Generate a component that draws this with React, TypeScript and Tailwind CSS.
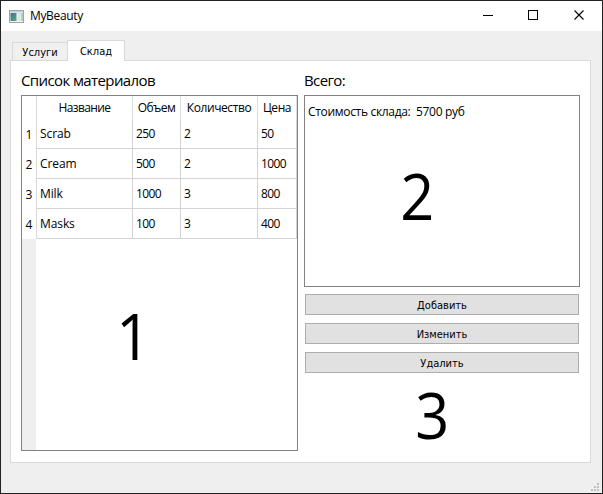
import React from "react";

const ui = "font-['Open_Sans','Noto_Sans',sans-serif]";
const tahoma = "font-['DejaVu_Sans_Condensed','DejaVu_Sans',sans-serif]";

const rows = [
  ["Scrab", "250", "2", "50"],
  ["Cream", "500", "2", "1000"],
  ["Milk", "1000", "3", "800"],
  ["Masks", "100", "3", "400"],
];

const columns = [
  { title: "Название", width: "w-24", tracking: "tracking-[-0.6px]" },
  { title: "Объем", width: "w-12", tracking: "tracking-[-0.55px]" },
  { title: "Количество", width: "w-[77px]", tracking: "tracking-[-0.4px]" },
  { title: "Цена", width: "w-[39px]", tracking: "tracking-[-0.45px]" },
];

function TitleBar() {
  return (
    <header className="flex h-[30px] shrink-0 items-center bg-white">
      <svg className="ml-2 mr-[6px] shrink-0" width="15" height="13" viewBox="0 0 15 13">
        <defs>
          <linearGradient id="pane" x1="0" y1="0" x2="1" y2="1">
            <stop offset="0" stopColor="#3e6f92" />
            <stop offset="1" stopColor="#56ad7c" />
          </linearGradient>
        </defs>
        <rect x="0.5" y="0.5" width="14" height="12" fill="#f4f5f5" stroke="#9da4a9" />
        <rect x="1" y="1" width="13" height="1.5" fill="#c4cdd2" />
        <rect x="1.5" y="3" width="6" height="8" fill="url(#pane)" />
        <rect x="8.5" y="3" width="3" height="8" fill="#e0e3e4" />
        <rect x="12.5" y="3" width="1" height="8" fill="#6ba98c" />
      </svg>
      <span className="flex-1 text-[12px] leading-[16px] tracking-[-0.35px]">MyBeauty</span>
      <svg width="120" height="30" viewBox="0 0 120 30" fill="none" stroke="#000" shapeRendering="crispEdges">
        <path d="M1 14.5h10M46.5 9.5h9v9h-9z" />
        <path d="M92.5 9.5l9 9M101.5 9.5l-9 9" strokeWidth="1.1" shapeRendering="auto" />
      </svg>
    </header>
  );
}

function Table() {
  return (
    <div className="flex h-[356px] w-[277px] border border-[#828282]">
      <div className="flex w-[14px] shrink-0 flex-col bg-[#efefef]">
        <div className="h-[23px] bg-white" />
        {rows.map((row, i) => (
          <div key={row[0]} className="flex h-[30px] items-center justify-center bg-white pt-[2px] text-[12px] leading-[16px]">
            {i + 1}
          </div>
        ))}
      </div>
      <div className="h-[143px] border-l border-[#d9d9d9]">
        <div className="flex h-[23px]">
          {columns.map((c) => (
            <div
              key={c.title}
              className={`flex items-center justify-center border-r border-[#dddddd] pt-px text-[12px] leading-[16px] ${c.width} ${c.tracking}`}
            >
              {c.title}
            </div>
          ))}
        </div>
        {rows.map((row) => (
          <div key={row[0]} className="flex h-[30px]">
            {row.map((cell, i) => (
              <div
                key={i}
                className={`flex items-center border-b border-r border-[#d3d3d3] pl-[3px] pt-px text-[12px] leading-[16px] ${columns[i].width} ${i ? "tracking-[-0.65px]" : "tracking-[-0.1px]"}`}
              >
                {cell}
              </div>
            ))}
          </div>
        ))}
      </div>
    </div>
  );
}

function Button({ children }: { children: React.ReactNode }) {
  return (
    <button
      className={`flex h-[21px] w-[274px] items-center justify-center border border-[#adadad] bg-[#e1e1e1] pt-[3px] text-[11px] leading-[14px] ${tahoma}`}
    >
      {children}
    </button>
  );
}

function Grip() {
  return (
    <svg className="mr-[3px] mb-[2px]" width="8" height="8" viewBox="0 0 8 8" fill="#bfbfbf">
      <path d="M6 0h2v2H6zM3 3h2v2H3zM6 3h2v2H6zM0 6h2v2H0zM3 6h2v2H3zM6 6h2v2H6z" />
    </svg>
  );
}

export default function App() {
  return (
    <div className={`relative flex h-[494px] w-[603px] flex-col overflow-hidden border border-[#222222] bg-[#efefef] text-black ${ui}`}>
      <TitleBar />
      <nav className={`z-10 flex h-[30px] items-end pl-[11px] text-[11px] leading-[14px] ${tahoma}`}>
        <div className="mb-px flex h-[18px] w-[55px] items-center justify-center border border-r-0 border-b-0 border-[#d9d9d9] bg-[#f0f0f0] pt-[2px]">
          Услуги
        </div>
        <div className="flex h-[21px] w-[58px] items-center justify-center border border-b-0 border-[#d9d9d9] bg-white pt-px">
          Склад
        </div>
      </nav>
      <main className="-mt-px ml-[9px] flex h-[403px] w-[581px] shrink-0 gap-[6px] border border-[#d9d9d9] bg-white pl-[10px]">
        <section>
          <h2 className="h-[34px] pt-[9px] text-[15px] leading-[20px] tracking-[-0.6px]">Список материалов</h2>
          <Table />
        </section>
        <section>
          <h2 className="h-[34px] pt-[9px] text-[15px] leading-[20px] tracking-[-0.6px]">Всего:</h2>
          <div className="h-[192px] w-[276px] whitespace-pre border border-[#828282] pl-[3px] pt-2 text-[12px] leading-[16px] tracking-[-0.32px]">
            Стоимость склада:  5700 руб
          </div>
          <div className="mt-[7px] flex flex-col gap-2 pl-px">
            <Button>Добавить</Button>
            <Button>Изменить</Button>
            <Button>Удалить</Button>
          </div>
        </section>
      </main>
      <footer className="flex flex-1 items-end justify-end">
        <Grip />
      </footer>
      <span className="absolute left-[114px] top-[291px] origin-center scale-x-95 text-[64px] leading-[87px]">1</span>
      <span className="absolute left-[398px] top-[151px] origin-center scale-x-93 text-[64px] leading-[87px]">2</span>
      <span className="absolute left-[413px] top-[370px] origin-center scale-x-93 text-[64px] leading-[87px]">3</span>
    </div>
  );
}
